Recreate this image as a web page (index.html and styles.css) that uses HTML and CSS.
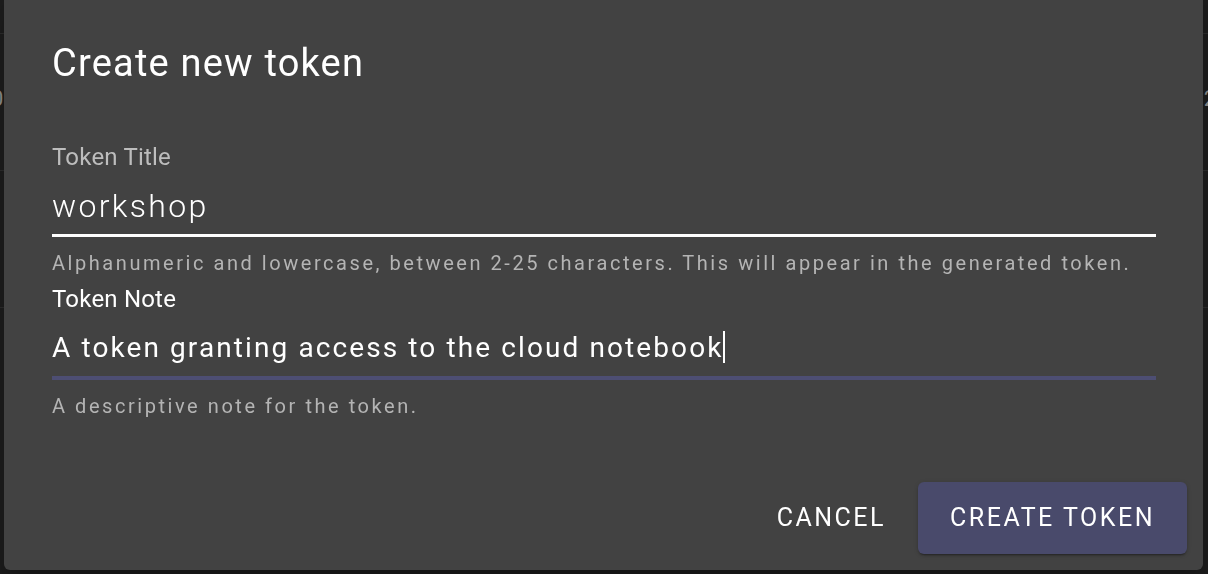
FILE: index.html
```html
<!DOCTYPE html>
<html lang="en">
<head>
<meta charset="utf-8">
<title>Create new token</title>
<link rel="stylesheet" href="styles.css">
</head>
<body>
  <div class="page">
    <div class="bg-row bg-head"></div>
    <div class="bg-row bg-tall">
      <span class="bg-cell-left">0</span>
      <span class="bg-cell-right">2</span>
    </div>
    <div class="bg-row bg-tall"></div>
  </div>

  <div class="overlay">
    <div class="dialog" role="dialog" aria-labelledby="dlg-title">
      <h2 class="dialog-title" id="dlg-title">Create new token</h2>

      <div class="field">
        <label class="field-label field-label-muted" for="title">Token Title</label>
        <div class="input-wrap input-wrap-white">
          <input class="input input-mono" id="title" type="text" value="workshop">
        </div>
        <p class="helper">Alphanumeric and lowercase, between 2-25 characters. This will appear in the generated token.</p>
      </div>

      <div class="field field-note">
        <label class="field-label" for="note">Token Note</label>
        <div class="input-wrap input-wrap-accent">
          <div class="input input-text">A token granting access to the cloud notebook<span class="caret"></span></div>
        </div>
        <p class="helper">A descriptive note for the token.</p>
      </div>

      <div class="actions">
        <button class="btn btn-text" type="button">Cancel</button>
        <button class="btn btn-primary" type="button">Create token</button>
      </div>
    </div>
  </div>
</body>
</html>
```

FILE: styles.css
```css
* { box-sizing: border-box; }

html, body {
  margin: 0;
  padding: 0;
  height: 100%;
}

body {
  background: #1c1c1c;
  font-family: Roboto, "Liberation Sans", Arial, sans-serif;
  color: #ffffff;
  overflow: hidden;
}

/* faint page content behind the modal */
.page {
  display: flex;
  flex-direction: column;
}
.bg-row {
  border-bottom: 1px solid #2b2b2b;
  display: flex;
  justify-content: space-between;
  align-items: center;
}
.bg-head { height: 34px; }
.bg-tall { height: 137px; }
.bg-cell-left,
.bg-cell-right {
  color: #8a8a8a;
  font-size: 22px;
  line-height: 22px;
  margin-top: -6px;
}
.bg-cell-left { margin-left: -9px; }
.bg-cell-right { margin-right: -8px; }

/* modal */
.overlay {
  position: fixed;
  inset: 0;
  padding: 0 5px 0 4px;
}

.dialog {
  margin-top: -12px;
  height: 582px;
  background: #424242;
  border-radius: 6px;
  padding: 53px 16px 16px 48px;
  display: flex;
  flex-direction: column;
  box-shadow: 0 11px 15px -7px rgba(0,0,0,0.2), 0 24px 38px 3px rgba(0,0,0,0.14);
}

.dialog-title {
  margin: 0;
  font-size: 38px;
  line-height: 44px;
  font-weight: 400;
  letter-spacing: 1.2px;
  color: #ffffff;
}

.field {
  margin-top: 58px;
  padding-right: 31px;
  display: flex;
  flex-direction: column;
}
.field-note { margin-top: 10px; }

.field-label {
  font-size: 24px;
  line-height: 28px;
  color: #ffffff;
  letter-spacing: 0.2px;
}
.field-label-muted { color: #bdbdbd; }

.input-wrap {
  margin-top: 15px;
  padding-bottom: 8px;
}
.input-wrap-white { border-bottom: 3px solid #ffffff; }
.input-wrap-accent {
  margin-top: 17px;
  padding-bottom: 10px;
  border-bottom: 4px solid #4d4e73;
}

.input {
  display: block;
  width: 100%;
  margin: 0;
  padding: 0;
  border: 0;
  background: transparent;
  color: #ffffff;
  outline: none;
}
.input-mono {
  font-family: Roboto, "Liberation Sans", sans-serif;
  font-weight: 300;
  font-size: 32px;
  line-height: 40px;
  height: 40px;
  letter-spacing: 2.3px;
}
.input-text {
  font-size: 28px;
  line-height: 36px;
  height: 36px;
  letter-spacing: 2.1px;
  white-space: nowrap;
}
.caret {
  display: inline-block;
  width: 2px;
  height: 32px;
  background: #ffffff;
  vertical-align: -6px;
  margin-left: -1px;
}

.helper {
  margin: 14px 0 0;
  font-size: 20px;
  line-height: 24px;
  color: #b4b4b4;
  letter-spacing: 2.55px;
  white-space: nowrap;
}

.actions {
  margin-top: auto;
  display: flex;
  justify-content: flex-end;
  align-items: center;
}

.btn {
  font-family: Roboto, "Liberation Sans", sans-serif;
  font-size: 25px;
  font-weight: 400;
  letter-spacing: 2.5px;
  text-transform: uppercase;
  height: 72px;
  line-height: 72px;
  border: 0;
  border-radius: 6px;
  color: #ffffff;
  cursor: pointer;
  padding: 0 33px;
}
.btn-text {
  background: transparent;
  padding: 0 24px 0 26px;
  margin-right: 8px;
}
.btn-primary {
  background: #494a6b;
  width: 269px;
  padding: 0;
  box-shadow: 0 3px 1px -2px rgba(0,0,0,0.2), 0 2px 2px 0 rgba(0,0,0,0.14), 0 1px 5px 0 rgba(0,0,0,0.12);
}
```
